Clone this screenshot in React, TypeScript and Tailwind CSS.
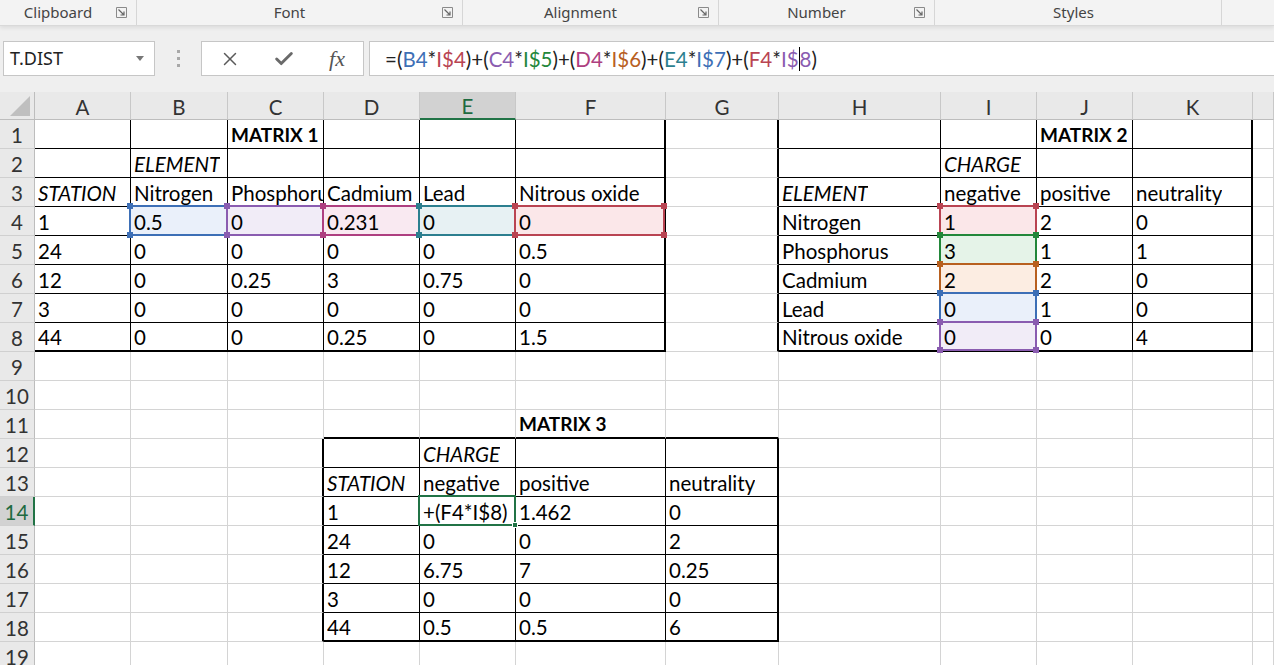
import { X, Check } from 'lucide-react';

const cellFont = { fontFamily: 'Lato, "Open Sans", sans-serif' };

const COLS = ['A', 'B', 'C', 'D', 'E', 'F', 'G', 'H', 'I', 'J', 'K', 'L'];

const DATA: Record<number, string[]> = {
  1: ['', '', 'MATRIX 1', '', '', '', '', '', '', 'MATRIX 2', '', ''],
  2: ['', 'ELEMENT', '', '', '', '', '', '', 'CHARGE', '', '', ''],
  3: ['STATION', 'Nitrogen', 'Phosphorus', 'Cadmium', 'Lead', 'Nitrous oxide', '', 'ELEMENT', 'negative', 'positive', 'neutrality', ''],
  4: ['1', '0.5', '0', '0.231', '0', '0', '', 'Nitrogen', '1', '2', '0', ''],
  5: ['24', '0', '0', '0', '0', '0.5', '', 'Phosphorus', '3', '1', '1', ''],
  6: ['12', '0', '0.25', '3', '0.75', '0', '', 'Cadmium', '2', '2', '0', ''],
  7: ['3', '0', '0', '0', '0', '0', '', 'Lead', '0', '1', '0', ''],
  8: ['44', '0', '0', '0.25', '0', '1.5', '', 'Nitrous oxide', '0', '0', '4', ''],
  11: ['', '', '', '', '', 'MATRIX 3', '', '', '', '', '', ''],
  12: ['', '', '', '', 'CHARGE', '', '', '', '', '', '', ''],
  13: ['', '', '', 'STATION', 'negative', 'positive', 'neutrality', '', '', '', '', ''],
  14: ['', '', '', '1', '+(F4*I$8)', '1.462', '0', '', '', '', '', ''],
  15: ['', '', '', '24', '0', '0', '2', '', '', '', '', ''],
  16: ['', '', '', '12', '6.75', '7', '0.25', '', '', '', '', ''],
  17: ['', '', '', '3', '0', '0', '0', '', '', '', '', ''],
  18: ['', '', '', '44', '0.5', '0.5', '6', '', '', '', '', ''],
};

const BOLD = ['C1', 'J1', 'F11'];
const ITALIC = ['B2', 'A3', 'I2', 'H3', 'E12', 'D13'];

const MATRICES = [
  { c0: 0, c1: 5, r0: 1, r1: 8 },
  { c0: 7, c1: 10, r0: 1, r1: 8 },
  { c0: 3, c1: 6, r0: 12, r1: 18 },
];

// reference highlight colours (formula edit mode)
const REFS: Record<string, { line: string; fill: string; dot: string }> = {
  B4: { line: 'border-[#3d6fb6]', fill: 'bg-[#eaf0fa]', dot: 'bg-[#3d6fb6]' },
  C4: { line: 'border-[#8a5cb0]', fill: 'bg-[#f1ecf7]', dot: 'bg-[#8a5cb0]' },
  D4: { line: 'border-[#ae3f80]', fill: 'bg-[#f9e9f1]', dot: 'bg-[#ae3f80]' },
  E4: { line: 'border-[#2c7f8f]', fill: 'bg-[#e7f1f3]', dot: 'bg-[#2c7f8f]' },
  F4: { line: 'border-[#b94452]', fill: 'bg-[#fbe7e9]', dot: 'bg-[#b94452]' },
  I4: { line: 'border-[#b94452]', fill: 'bg-[#fbe7e9]', dot: 'bg-[#b94452]' },
  I5: { line: 'border-[#23873a]', fill: 'bg-[#e5f3e8]', dot: 'bg-[#23873a]' },
  I6: { line: 'border-[#b8601f]', fill: 'bg-[#fcede2]', dot: 'bg-[#b8601f]' },
  I7: { line: 'border-[#3d6fb6]', fill: 'bg-[#eaf0fa]', dot: 'bg-[#3d6fb6]' },
  I8: { line: 'border-[#8a5cb0]', fill: 'bg-[#f1ecf7]', dot: 'bg-[#8a5cb0]' },
};

const FORMULA: [string, string][] = [
  ['=(', 'text-[#222]'], ['B4', 'text-[#3d6fb6]'], ['*', 'text-[#222]'], ['I$4', 'text-[#b94452]'],
  [')+(', 'text-[#222]'], ['C4', 'text-[#8a5cb0]'], ['*', 'text-[#222]'], ['I$5', 'text-[#23873a]'],
  [')+(', 'text-[#222]'], ['D4', 'text-[#ae3f80]'], ['*', 'text-[#222]'], ['I$6', 'text-[#b8601f]'],
  [')+(', 'text-[#222]'], ['E4', 'text-[#2c7f8f]'], ['*', 'text-[#222]'], ['I$7', 'text-[#3d6fb6]'],
  [')+(', 'text-[#222]'], ['F4', 'text-[#b94452]'], ['*', 'text-[#222]'], ['I$', 'text-[#8a5cb0]'],
];

function inMatrix(r: number, c: number) {
  return MATRICES.find((m) => r >= m.r0 && r <= m.r1 && c >= m.c0 && c <= m.c1);
}

function rightBorder(r: number, c: number) {
  const m = inMatrix(r, c);
  if (m) return c === m.c1 ? 'border-r-2 border-r-black' : 'border-r border-r-black';
  if (MATRICES.some((x) => x.c0 === c + 1 && r >= x.r0 && r <= x.r1)) return 'border-r-2 border-r-black';
  return 'border-r border-r-[#d4d4d4]';
}

function bottomBorder(r: number, c: number) {
  const m = inMatrix(r, c);
  if (m) return r === m.r1 ? 'border-b-2 border-b-black' : 'border-b border-b-black';
  if (MATRICES.some((x) => x.r0 === r + 1 && c >= x.c0 && c <= x.c1)) return 'border-b-2 border-b-black';
  return 'border-b border-b-[#d4d4d4]';
}

function Launcher() {
  return (
    <svg width="11" height="11" viewBox="0 0 11 11" className="shrink-0">
      <path d="M0.5 0.5h10v10" fill="none" stroke="#8a8a8a" />
      <path d="M0.5 0.5v10h10" fill="none" stroke="#8a8a8a" />
      <path d="M2.5 2.5l5.5 5.5M8 4.5v3.5h-3.5" fill="none" stroke="#666" strokeWidth="1.2" />
    </svg>
  );
}

function RibbonGroup({ label, w, launcher }: { label: string; w: string; launcher?: boolean }) {
  return (
    <div className={`${w} h-full flex items-center border-r border-[#d6d6d6] pr-[9px]`}>
      <span className="flex-1 text-center">{label}</span>
      {launcher && <Launcher />}
    </div>
  );
}

function Cell({ r, c }: { r: number; c: number }) {
  const key = `${COLS[c]}${r}`;
  const text = DATA[r]?.[c] ?? '';
  const ref = REFS[key];
  const active = key === 'E14';
  const bold = BOLD.includes(key);
  return (
    <div
      className={`relative h-[29px] min-w-0 ${rightBorder(r, c)} ${bottomBorder(r, c)} ${ref ? ref.fill : ''} flex items-center pl-[3px] whitespace-nowrap leading-[26px] text-black ${
        bold ? 'font-bold text-[19px]' : 'text-[20.5px]'
      } ${ITALIC.includes(key) ? 'italic' : ''}`}
    >
      <span className="block min-w-0 overflow-hidden pt-[1px]">{text}</span>
      {ref && (
        <div className={`absolute -left-[2px] -top-[2px] -right-[1px] -bottom-[1px] border-2 ${ref.line} z-10 pointer-events-none`}>
          <div className={`absolute -left-[4px] -top-[4px] w-[6px] h-[6px] ${ref.dot}`} />
          <div className={`absolute -right-[4px] -top-[4px] w-[6px] h-[6px] ${ref.dot}`} />
          <div className={`absolute -left-[4px] -bottom-[4px] w-[6px] h-[6px] ${ref.dot}`} />
          <div className={`absolute -right-[4px] -bottom-[4px] w-[6px] h-[6px] ${ref.dot}`} />
        </div>
      )}
      {active && (
        <div className="absolute -left-[2px] -top-[2px] -right-[1px] -bottom-[1px] border-2 border-[#217346] z-10 pointer-events-none">
          <div className="absolute -right-[4px] -bottom-[4px] w-[6px] h-[6px] bg-[#217346] border border-white" />
        </div>
      )}
    </div>
  );
}

export default function App() {
  const rows = Array.from({ length: 19 }, (_, i) => i + 1);
  return (
    <div className="w-[1274px] h-[665px] overflow-hidden bg-white" style={cellFont}>
      {/* ribbon group labels */}
      <div
        className="h-[26px] bg-[#f3f3f3] flex text-[15px] text-[#444] border-b border-[#d9d9d9] shadow-[0_2px_4px_rgba(0,0,0,0.08)] relative z-20"
        style={{ fontFamily: '"Noto Sans", "Open Sans", sans-serif' }}
      >
        <RibbonGroup label="Clipboard" w="w-[137px]" launcher />
        <RibbonGroup label="Font" w="w-[326px]" launcher />
        <RibbonGroup label="Alignment" w="w-[256px]" launcher />
        <RibbonGroup label="Number" w="w-[216px]" launcher />
        <RibbonGroup label="Styles" w="w-[287px]" />
      </div>

      {/* formula bar */}
      <div className="h-[66px] bg-[#efefef] flex items-start pt-[15px] pl-[3px]">
        <div
          className="w-[152px] h-[35px] bg-white border border-[#c6c6c6] flex items-center pl-[6px] pr-[10px] text-[18px] text-[#222]"
          style={{ fontFamily: '"Noto Sans", "Open Sans", sans-serif' }}
        >
          <span className="flex-1">T.DIST</span>
          <svg width="8" height="5" viewBox="0 0 8 5">
            <path d="M0 0h8L4 5z" fill="#777" />
          </svg>
        </div>
        <div className="w-[46px] h-[35px] flex flex-col items-center justify-center gap-[4px]">
          <div className="w-[3px] h-[3px] bg-[#a8a8a8]" />
          <div className="w-[3px] h-[3px] bg-[#a8a8a8]" />
          <div className="w-[3px] h-[3px] bg-[#a8a8a8]" />
        </div>
        <div className="w-[163px] h-[35px] bg-white border border-[#c6c6c6] flex items-center text-[#5a5a5a]">
          <div className="w-[54px] flex justify-center pl-[2px]">
            <X size={22} strokeWidth={1.6} />
          </div>
          <div className="w-[56px] flex justify-center">
            <Check size={22} strokeWidth={3.2} className="text-[#6a6a6a]" />
          </div>
          <div
            className="w-[50px] flex justify-center italic text-[22px] text-[#555]"
            style={{ fontFamily: '"Liberation Serif", serif' }}
          >
            fx
          </div>
        </div>
        <div className="ml-[5px] flex-1 h-[35px] bg-white border border-[#c6c6c6] border-r-0 flex items-center pl-[15px] pt-[1px] text-[20.5px] leading-[26px]">
          {FORMULA.map(([t, cls], i) => (
            <span key={i} className={cls}>
              {t}
            </span>
          ))}
          <span className="inline-block w-[1px] h-[24px] bg-black" />
          <span className="text-[#8a5cb0]">8</span>
          <span className="text-[#222]">)</span>
        </div>
      </div>

      {/* sheet */}
      <div className="grid grid-cols-[35px_96px_97px_96px_96px_96px_150px_113px_162px_96px_96px_120px_1fr] auto-rows-min">
        {/* corner */}
        <div className="h-[28px] bg-[#e9e9e9] border-r border-b border-[#bdbdbd] flex items-end justify-end pr-[4px] pb-[3px]">
          <svg width="20" height="20" viewBox="0 0 20 20">
            <path d="M20 0V20H0z" fill="#bfbfbf" />
          </svg>
        </div>
        {COLS.map((c) => (
          <div
            key={c}
            className={`h-[28px] flex items-center justify-center pt-[2px] text-[20.5px] leading-[24px] border-r border-r-[#c8c8c8] ${
              c === 'E'
                ? 'bg-[#d2d2d2] text-[#1e6b41] border-b-2 border-b-[#217346]'
                : 'bg-[#e9e9e9] text-[#333] border-b border-b-[#bdbdbd]'
            }`}
          >
            {c === 'L' ? '' : c}
          </div>
        ))}
        {rows.map((r) => (
          <>
            <div
              key={`h${r}`}
              className={`h-[29px] flex items-center justify-center pt-[1px] text-[20.5px] leading-[24px] border-b border-b-[#d0d0d0] ${
                r === 14
                  ? 'bg-[#d2d2d2] text-[#1e6b41] border-r-2 border-r-[#217346]'
                  : 'bg-[#e9e9e9] text-[#333] border-r border-r-[#bdbdbd]'
              }`}
            >
              {r}
            </div>
            {COLS.map((_, c) => (
              <Cell key={`${r}-${c}`} r={r} c={c} />
            ))}
          </>
        ))}
      </div>
    </div>
  );
}
